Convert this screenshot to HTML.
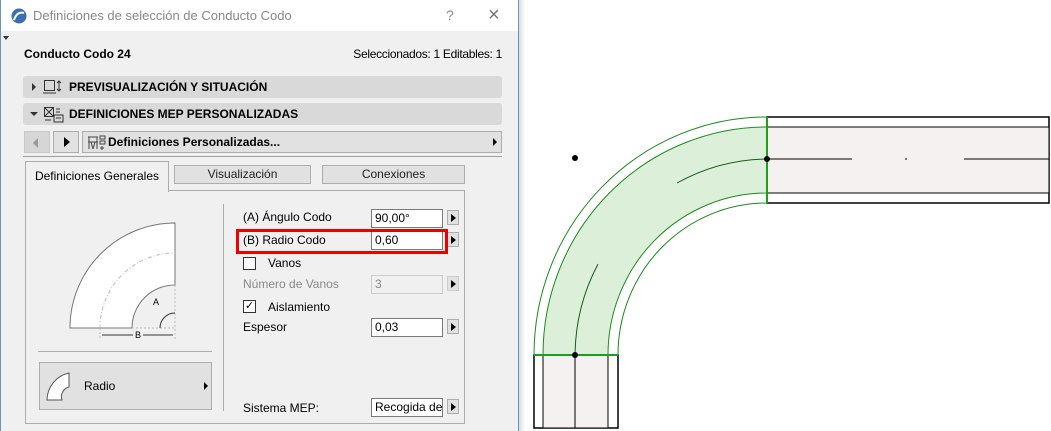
<!DOCTYPE html>
<html><head><meta charset="utf-8"><style>
*{margin:0;padding:0;box-sizing:border-box}
body{width:1051px;height:431px;background:#fff;position:relative;overflow:hidden;font-family:"Liberation Sans",sans-serif;font-size:12px;color:#000}
.a{position:absolute}
.win{left:0;top:0;width:519px;height:431px;background:#f0f0f0;border-left:1px solid #6a94bd;border-right:1px solid #6a94bd}
.title{left:1px;top:0;width:517px;height:31px;background:#fff}
.bar{background:#d9d9d9;border-radius:3px;height:22px;left:23px;width:479px;font-weight:bold;font-size:12px;line-height:22px}
.inp{background:#fff;border:1px solid #7a7a7a;width:72px;height:19px;left:371px;line-height:17px;padding-left:3px;font-size:12px}
.btn{width:12px;height:15px;left:447px;background:#e1e1e1;border:1px solid #adadad}
.btn:after{content:"";position:absolute;left:3px;top:3px;border-left:5px solid #000;border-top:4px solid transparent;border-bottom:4px solid transparent}
.lbl{left:243px;font-size:12px}
.tab{top:165px;height:19px;border:1px solid #adadad;background:#e1e1e1;text-align:center;line-height:16px;color:#222}
</style></head><body>
<div class="a win"></div>
<div class="a title"></div>
<svg class="a" style="left:11px;top:8px" width="16" height="16"><circle cx="8" cy="8" r="7.5" fill="#3b6fb0"/><path d="M3 12 Q6 3 13 5" stroke="#fff" stroke-width="2" fill="none"/></svg>
<div class="a" style="left:33px;top:8px;font-size:13px;color:#888">Definiciones de selección de Conducto Codo</div>
<div class="a" style="left:446px;top:7px;font-size:14px;color:#888">?</div>
<div class="a" style="left:488px;top:4px;font-size:20px;color:#777">×</div>
<div class="a" style="left:3px;top:36px;border-top:4px solid #333;border-left:3px solid transparent;border-right:3px solid transparent"></div>
<div class="a" style="left:24px;top:47px;font-weight:bold">Conducto Codo 24</div>
<div class="a" style="right:549px;top:47px;white-space:nowrap;letter-spacing:-0.3px">Seleccionados: 1 Editables: 1</div>
<div class="a bar" style="top:76px"><span class="a" style="left:9px;top:7px;border-left:4px solid #333;border-top:4px solid transparent;border-bottom:4px solid transparent"></span><svg class="a" style="left:20px;top:3px" width="22" height="16"><rect x="1.5" y="1.5" width="10" height="10" fill="none" stroke="#333"/><path d="M0 14 H13 M16 2 V12 M14 4 L16 2 L18 4 M14 10 L16 12 L18 10" stroke="#333" fill="none"/></svg><span class="a" style="left:46px">PREVISUALIZACIÓN Y SITUACIÓN</span></div>
<div class="a bar" style="top:103px"><span class="a" style="left:7px;top:9px;border-top:4px solid #333;border-left:4px solid transparent;border-right:4px solid transparent"></span><svg class="a" style="left:20px;top:3px" width="22" height="17"><rect x="1.5" y="1.5" width="9" height="9" fill="none" stroke="#333"/><path d="M2 2 L10 10 M10 2 L2 10 M13 3 H17 M13 6 H17 M11 9 H20 V16 H11 Z M13 12 H18 M2 14 H8" stroke="#333" fill="none"/></svg><span class="a" style="left:46px">DEFINICIONES MEP PERSONALIZADAS</span></div>
<div class="a" style="left:24px;top:131px;width:26px;height:22px;background:#d6d6d6;border:1px solid #c8c8c8"><span class="a" style="left:8px;top:6px;border-right:5px solid #999;border-top:5px solid transparent;border-bottom:5px solid transparent"></span></div>
<div class="a" style="left:53px;top:131px;width:26px;height:22px;background:#e1e1e1;border:1px solid #adadad"><span class="a" style="left:10px;top:5px;border-left:6px solid #000;border-top:5px solid transparent;border-bottom:5px solid transparent"></span></div>
<div class="a" style="left:82px;top:131px;width:420px;height:22px;background:#e1e1e1;border:1px solid #adadad;font-weight:bold;line-height:20px"><svg class="a" style="left:4px;top:2px" width="20" height="17"><path d="M1 3 H11 M2 3 V15 M10 3 V15 M1 8 H11 M4 8 L6 15 M8 8 L6 15 M13 2 H18 V5 H13 Z M13 7 H18 V10 H13 Z M15 12 V16 M13 14 H17" stroke="#444" fill="none"/></svg><span class="a" style="left:25px">Definiciones Personalizadas...</span><span class="a" style="left:410px;top:6px;border-left:4px solid #000;border-top:4px solid transparent;border-bottom:4px solid transparent"></span></div>
<div class="a" style="left:23px;top:156px;width:479px;height:1px;background:#a0a0a0"></div>
<div class="a" style="left:25px;top:190px;width:440px;height:234px;border:1px solid #adadad"></div>
<div class="a" style="left:25px;top:161px;width:144px;height:31px;border:1px solid #adadad;border-bottom:none;background:#f0f0f0;text-align:center;line-height:28px">Definiciones Generales</div>
<div class="a tab" style="left:174px;width:137px">Visualización</div>
<div class="a tab" style="left:322px;width:143px">Conexiones</div>
<div class="a" style="left:223px;top:204px;width:1px;height:207px;background:#adadad"></div>
<svg class="a" style="left:60px;top:205px" width="125" height="135">
<path d="M10 123 A105 105 0 0 1 115 18 L115 80 A43 43 0 0 0 72 123 Z" fill="#fff" stroke="#777"/>
<path d="M40 123 A75 75 0 0 1 115 48" stroke="#bbb" fill="none" stroke-dasharray="4 2 1 2"/>
<path d="M40 123 V140 M115 80 V140 M72 123 H115" stroke="#bbb" stroke-dasharray="2 2" fill="none"/>
<path d="M100 123 A15 15 0 0 1 115 108" stroke="#333" fill="none"/>
<path d="M42 130 H113" stroke="#333"/>
<text x="93" y="100" font-size="9" font-family="Liberation Sans">A</text>
<rect x="73" y="125" width="10" height="10" fill="#f0f0f0"/>
<text x="75" y="133" font-size="9" font-family="Liberation Sans">B</text>
</svg>
<div class="a" style="left:38px;top:351px;width:174px;height:1px;background:#adadad"></div>
<div class="a" style="left:39px;top:362px;width:173px;height:48px;background:#e1e1e1;border:1px solid #adadad"><svg class="a" style="left:6px;top:8px" width="24" height="32"><path d="M1 29 A28 28 0 0 1 23 2 V16 A10 10 0 0 0 16 29 Z" fill="#fff" stroke="#555"/></svg><span class="a" style="left:44px;top:16px">Radio</span><span class="a" style="left:164px;top:19px;border-left:4px solid #000;border-top:4px solid transparent;border-bottom:4px solid transparent"></span></div>
<div class="a lbl" style="top:210px">(A) Ángulo Codo</div>
<div class="a inp" style="top:209px">90,00°</div><div class="a btn" style="top:210px"></div>
<div class="a lbl" style="top:233px">(B) Radio Codo</div>
<div class="a inp" style="top:231px">0,60</div><div class="a btn" style="top:232px"></div>
<div class="a" style="left:236px;top:229px;width:212px;height:25px;border:3px solid #e00"></div>
<div class="a" style="left:243px;top:257px;width:13px;height:13px;border:1px solid #333;background:#fff"></div>
<div class="a" style="left:268px;top:256px">Vanos</div>
<div class="a lbl" style="top:277px;color:#888">Número de Vanos</div>
<div class="a inp" style="top:275px;background:#f0f0f0;border-color:#ccc;color:#888">3</div><div class="a btn" style="top:276px;border-color:#ccc"></div>
<div class="a" style="left:243px;top:300px;width:13px;height:13px;border:1px solid #333;background:#fff;font-size:11px;line-height:11px;text-align:center">✓</div>
<div class="a" style="left:268px;top:300px">Aislamiento</div>
<div class="a lbl" style="top:320px">Espesor</div>
<div class="a inp" style="top:318px">0,03</div><div class="a btn" style="top:319px"></div>
<div class="a lbl" style="top:401px">Sistema MEP:</div>
<div class="a inp" style="top:398px;overflow:hidden;white-space:nowrap">Recogida de</div><div class="a btn" style="top:399px"></div>
<div class="a" style="left:519px;top:0;width:6px;height:431px;background:linear-gradient(90deg,#ddd,#fff)"></div>
<svg class="a" style="left:0;top:0" width="1051" height="431">
<rect x="767" y="117" width="282" height="86" fill="#fff" stroke="#000" stroke-width="1.5"/>
<rect x="767" y="127" width="282" height="66" fill="#f4f1f0" stroke="#000" stroke-width="1"/>
<path d="M767 159 H852 M905 159 H907 M964 159 H1049" stroke="#000"/>
<rect x="534" y="355" width="84" height="73" fill="#fff" stroke="#000" stroke-width="1.5"/>
<rect x="543" y="355" width="65" height="73" fill="#f4f1f0" stroke="#000"/>
<path d="M575 355 V428" stroke="#000"/>
<path d="M543 355 A224 228 0 0 1 767 127 V193 A159 162 0 0 0 608 355 Z" fill="#dcf0d9" stroke="#1a8a1a"/>
<path d="M534 355 A233 238 0 0 1 767 117" fill="none" stroke="#1a8a1a"/>
<path d="M618 355 A149 152 0 0 1 767 203" fill="none" stroke="#1a8a1a"/>
<path d="M534 355 H618 M767 117 V203" stroke="#1aa01a" stroke-width="2"/>
<path d="M677 183 A192 196 0 0 1 767 159" fill="none" stroke="#1a5a1a"/>
<path d="M575 355 A192 196 0 0 1 598 264" fill="none" stroke="#1a5a1a"/>
<circle cx="575" cy="158" r="3" fill="#000"/><circle cx="767" cy="159" r="3" fill="#000"/><circle cx="575" cy="355" r="3" fill="#000"/>
</svg>
</body></html>
